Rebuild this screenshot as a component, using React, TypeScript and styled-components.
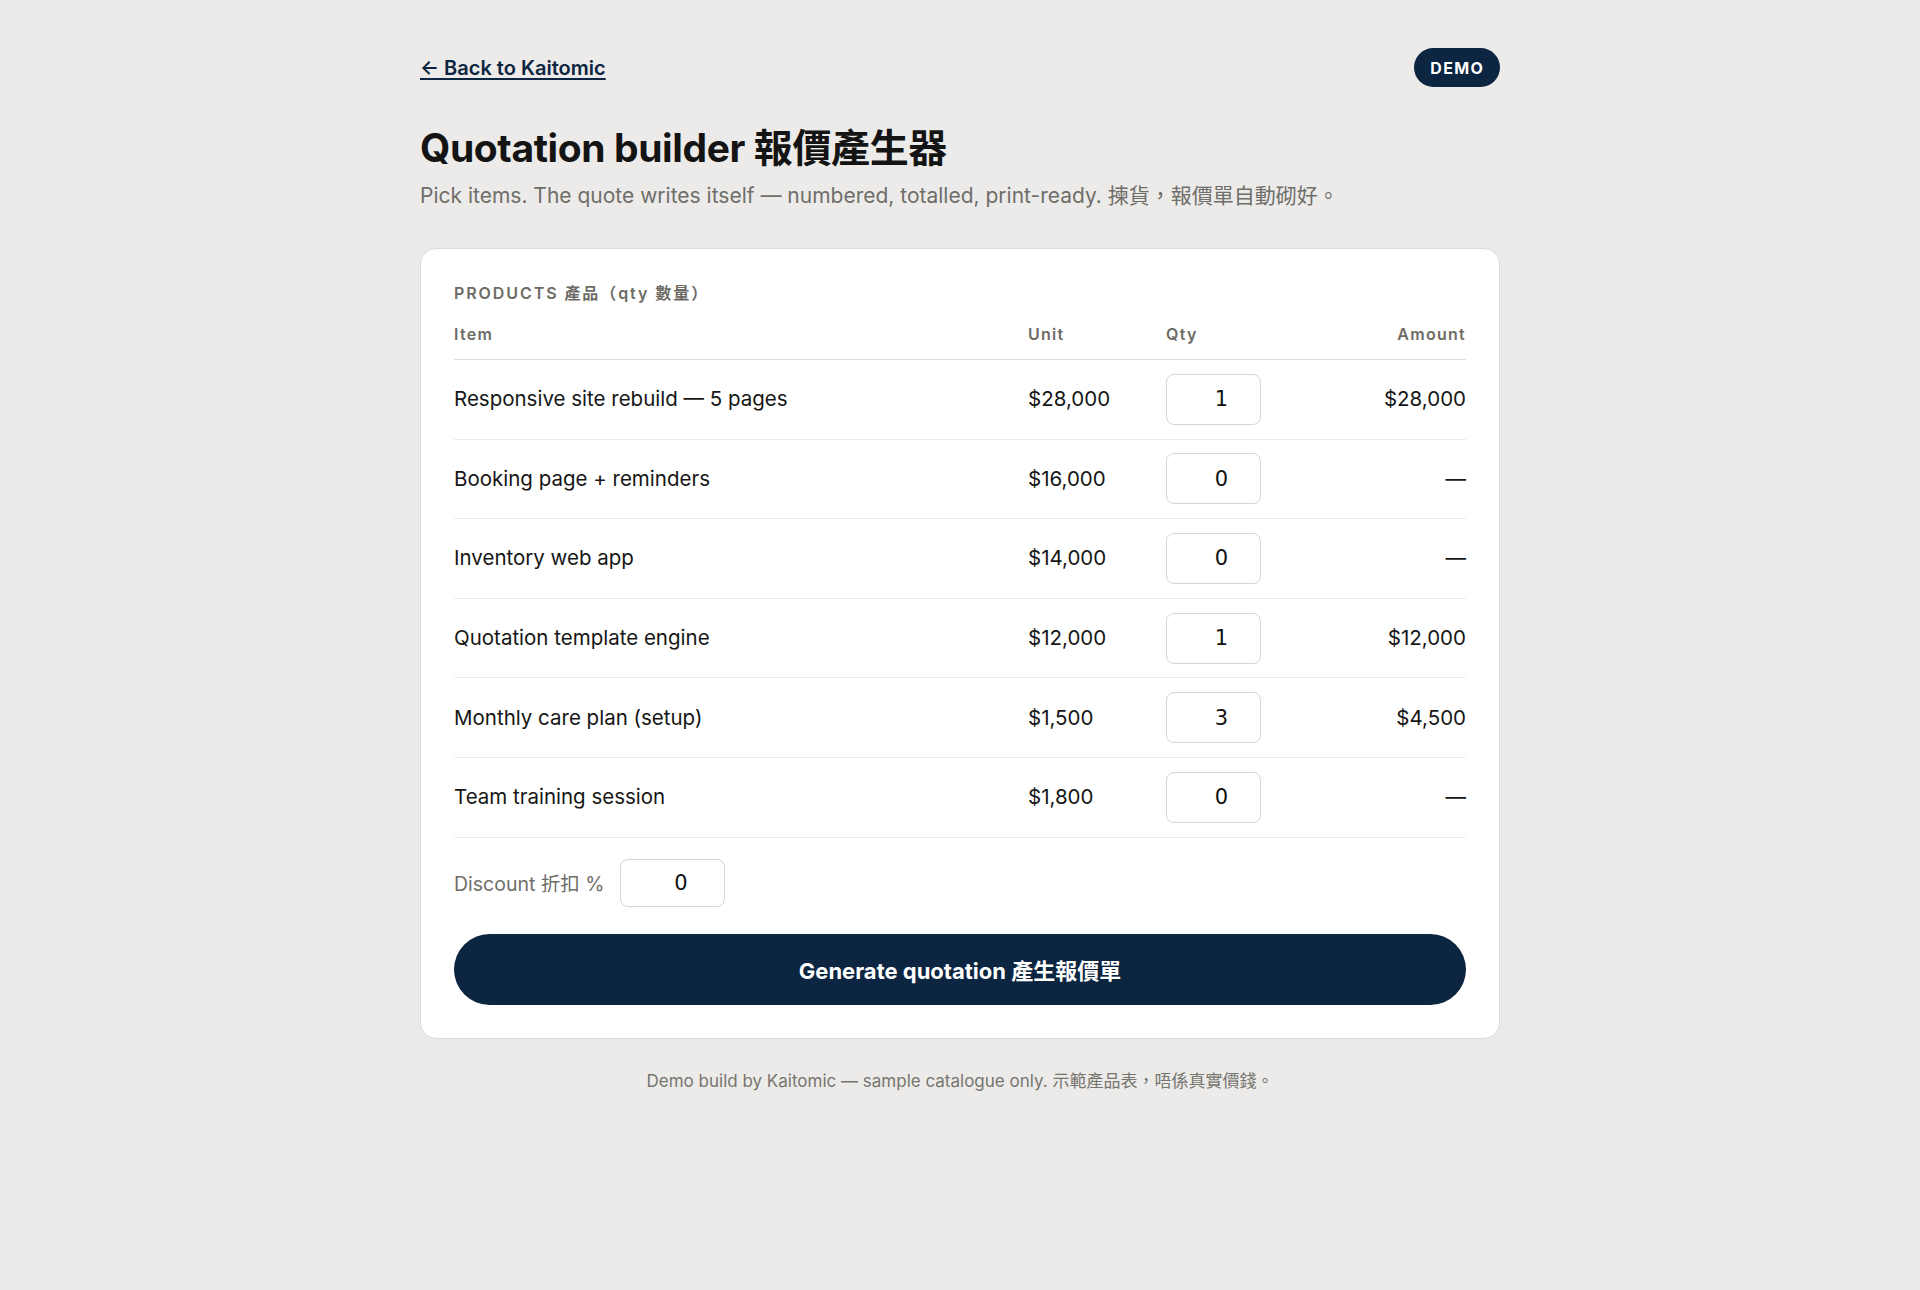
import React, { useState } from "react";
import styled, { createGlobalStyle } from "styled-components";

const GlobalStyle = createGlobalStyle`
  html, body {
    margin: 0;
    padding: 0;
    background: #ecebe9;
  }
  body {
    font-family: Inter, "Noto Sans CJK TC", sans-serif;
    color: #161616;
  }
  * { box-sizing: border-box; }
`;

const Page = styled.main`
  width: 1080px;
  margin: 0 auto;
  padding: 48px 0 80px;
`;

const TopBar = styled.header`
  display: flex;
  align-items: center;
  justify-content: space-between;
  height: 39px;
`;

const BackLink = styled.a`
  color: #0c2541;
  font-size: 20px;
  font-weight: 600;
  text-decoration: underline;
  text-underline-offset: 3px;
  text-decoration-thickness: 1.5px;
`;

const Badge = styled.span`
  display: inline-flex;
  align-items: center;
  height: 39px;
  padding: 0 16px;
  border-radius: 999px;
  background: #0c2541;
  color: #fff;
  font-size: 16px;
  font-weight: 700;
  letter-spacing: 0.08em;
`;

const Title = styled.h1`
  margin: 37px 0 0;
  font-size: 39px;
  line-height: 48px;
  font-weight: 700;
  letter-spacing: -0.01em;
  color: #141414;
`;

const Lead = styled.p`
  margin: 10px 0 0;
  font-size: 21px;
  line-height: 28px;
  color: #6f6e69;
`;

const Card = styled.section`
  margin-top: 38px;
  background: #fff;
  border: 1px solid #dcdad4;
  border-radius: 16px;
  padding: 33px;
`;

const SectionLabel = styled.div`
  font-size: 16px;
  line-height: 22px;
  font-weight: 600;
  letter-spacing: 0.12em;
  color: #6d6b65;
  margin-bottom: 14px;
`;

const Row = styled.div<{ $head?: boolean }>`
  display: grid;
  grid-template-columns: minmax(0, 1fr) 138px 95px 205px;
  align-items: center;
  border-bottom: 1px solid ${({ $head }) => ($head ? "#dedcd6" : "#ecebe7")};
  height: ${({ $head }) => ($head ? "42px" : "79.6px")};
  padding-bottom: ${({ $head }) => ($head ? "15px" : "0")};
  align-content: ${({ $head }) => ($head ? "end" : "center")};
`;

const HeadCell = styled.div<{ $right?: boolean }>`
  font-size: 16px;
  line-height: 20px;
  font-weight: 600;
  letter-spacing: 0.08em;
  color: #6d6b65;
  text-align: ${({ $right }) => ($right ? "right" : "left")};
`;

const Cell = styled.div<{ $right?: boolean }>`
  font-size: 20.5px;
  line-height: 28px;
  color: #161616;
  text-align: ${({ $right }) => ($right ? "right" : "left")};
`;

const NumberInput = styled.input<{ $w: number; $h: number }>`
  width: ${({ $w }) => $w}px;
  height: ${({ $h }) => $h}px;
  border: 1px solid #d8d6cf;
  border-radius: 8px;
  background: #fff;
  font-family: "DejaVu Sans", sans-serif;
  font-size: 21px;
  color: #111;
  text-align: center;
  padding: 0 0 0 16px;
  outline: none;
  -moz-appearance: textfield;
  &::-webkit-outer-spin-button,
  &::-webkit-inner-spin-button {
    -webkit-appearance: none;
    margin: 0;
  }
`;

const DiscountRow = styled.label`
  display: flex;
  align-items: center;
  gap: 16px;
  margin-top: 21px;
  font-size: 19.5px;
  color: #6f6e69;
`;

const GenerateButton = styled.button`
  display: block;
  width: 100%;
  height: 71px;
  margin-top: 27px;
  border: none;
  border-radius: 999px;
  background: #0c2541;
  color: #fff;
  font-family: Inter, "Noto Sans CJK TC", sans-serif;
  font-size: 22px;
  font-weight: 700;
  cursor: pointer;
`;

const Footer = styled.footer`
  margin-top: 32px;
  text-align: center;
  font-size: 17px;
  line-height: 20px;
  color: #76756f;
`;

const products = [
  { name: "Responsive site rebuild — 5 pages", unit: 28000, qty: 1 },
  { name: "Booking page + reminders", unit: 16000, qty: 0 },
  { name: "Inventory web app", unit: 14000, qty: 0 },
  { name: "Quotation template engine", unit: 12000, qty: 1 },
  { name: "Monthly care plan (setup)", unit: 1500, qty: 3 },
  { name: "Team training session", unit: 1800, qty: 0 },
];

const money = (n: number) => "$" + n.toLocaleString("en-US");

export default function App() {
  const [qtys, setQtys] = useState(products.map((p) => p.qty));
  const [discount, setDiscount] = useState(0);

  return (
    <>
      <GlobalStyle />
      <Page>
        <TopBar>
          <BackLink href="#">← Back to Kaitomic</BackLink>
          <Badge>DEMO</Badge>
        </TopBar>
        <Title>Quotation builder 報價產生器</Title>
        <Lead>
          Pick items. The quote writes itself — numbered, totalled, print-ready. 揀貨，報價單自動砌好。
        </Lead>

        <Card>
          <SectionLabel>PRODUCTS 產品（qty 數量）</SectionLabel>
          <Row $head>
            <HeadCell>Item</HeadCell>
            <HeadCell>Unit</HeadCell>
            <HeadCell>Qty</HeadCell>
            <HeadCell $right>Amount</HeadCell>
          </Row>
          {products.map((p, i) => (
            <Row key={p.name}>
              <Cell>{p.name}</Cell>
              <Cell>{money(p.unit)}</Cell>
              <NumberInput
                type="number"
                min={0}
                $w={95}
                $h={51}
                value={qtys[i]}
                onChange={(e) => {
                  const next = [...qtys];
                  next[i] = Number(e.target.value) || 0;
                  setQtys(next);
                }}
              />
              <Cell $right>{qtys[i] > 0 ? money(p.unit * qtys[i]) : "—"}</Cell>
            </Row>
          ))}

          <DiscountRow>
            Discount 折扣 %
            <NumberInput
              type="number"
              min={0}
              max={100}
              $w={105}
              $h={48}
              value={discount}
              onChange={(e) => setDiscount(Number(e.target.value) || 0)}
            />
          </DiscountRow>

          <GenerateButton type="button">Generate quotation 產生報價單</GenerateButton>
        </Card>

        <Footer>Demo build by Kaitomic — sample catalogue only. 示範產品表，唔係真實價錢。</Footer>
      </Page>
    </>
  );
}
